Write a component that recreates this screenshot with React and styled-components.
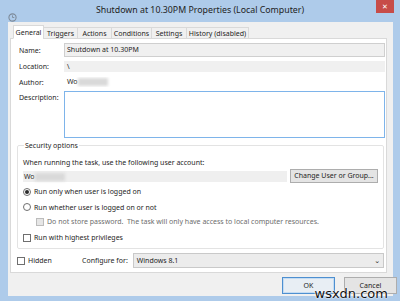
import React from "react";
import styled, { createGlobalStyle } from "styled-components";

const GlobalStyle = createGlobalStyle`
  html, body { margin: 0; padding: 0; }
  body { font-family: "Noto Sans", "DejaVu Sans", sans-serif; color: #1e1e1e; }
  * { box-sizing: border-box; }
`;

const Window = styled.div`
  position: relative;
  width: 400px;
  height: 301px;
  background: #aecbea;
  display: flex;
  flex-direction: column;
  overflow: hidden;
`;

const TitleBar = styled.div`
  height: 22px;
  display: grid;
  grid-template-columns: 30px 1fr 30px;
  align-items: start;
`;

const TitleIcon = styled.div`
  padding: 5px 0 0 8px;
  color: #7d8a99;
`;

const TitleText = styled.div`
  text-align: center;
  font-size: 8.8px;
  line-height: 21px;
  color: #222;
`;

const CloseButton = styled.div`
  justify-self: end;
  width: 18px;
  height: 13px;
  margin-right: 6px;
  background: #c74c48;
  color: #fff;
  font-size: 7px;
  font-weight: 700;
  line-height: 13px;
  text-align: center;
`;

const Client = styled.div`
  flex: 1;
  margin: 0 7px 5px 8px;
  background: #f0f0f0;
  display: flex;
  flex-direction: column;
  padding-top: 3px;
  font-size: 7px;
`;

const TabRow = styled.div`
  display: flex;
  align-items: flex-end;
  padding-left: 6px;
  height: 14px;
  position: relative;
  z-index: 1;
  margin-bottom: -1px;
`;

const Tab = styled.div`
  height: ${(p) => (p.$active ? "14px" : "12px")};
  width: ${(p) => p.$w}px;
  text-align: center;
  line-height: ${(p) => (p.$active ? "13px" : "11px")};
  border: 1px solid #d9d9d9;
  border-bottom: ${(p) => (p.$active ? "1px solid #fff" : "1px solid #d9d9d9")};
  margin-left: -1px;
  background: ${(p) => (p.$active ? "#fff" : "#f0f0f0")};
  white-space: nowrap;
`;

const Panel = styled.div`
  margin: 0 6px 0 2px;
  height: 235px;
  background: #fff;
  border: 1px solid #d9d9d9;
  padding: 4px 1px 0 8px;
  display: flex;
  flex-direction: column;
`;

const FieldRow = styled.div`
  display: grid;
  grid-template-columns: 45px 1fr;
  align-items: ${(p) => (p.$top ? "start" : "center")};
  margin-bottom: ${(p) => p.$gap ?? 4}px;
`;

const Label = styled.div`
  padding-top: ${(p) => (p.$top ? "2px" : "0")};
`;

const Field = styled.div`
  height: ${(p) => p.$h || 14}px;
  line-height: ${(p) => (p.$h || 14) - 2}px;
  padding: 0 2px;
  background: ${(p) => (p.$white ? "#fff" : "#f0f0f0")};
  border: 1px solid ${(p) => (p.$border ? p.$border : "transparent")};
  white-space: nowrap;
  overflow: hidden;
`;

const Blur = styled.span`
  display: inline-block;
  width: 30px;
  height: 8px;
  vertical-align: middle;
  background: #d9d9d9;
  filter: blur(1.5px);
`;

const Group = styled.fieldset`
  margin: 3px 1px 0 -2px;
  padding: 8px 5px 2px 5px;
  border: 1px solid #e3e3e3;
  border-radius: 2px;
  display: flex;
  flex-direction: column;
`;

const Legend = styled.legend`
  padding: 0 1px;
  margin-left: 1px;
  font-size: 7px;
`;

const AccountRow = styled.div`
  display: flex;
  align-items: center;
  margin-top: 2px;
  gap: 3px;
`;

const UserField = styled.div`
  flex: 1;
  height: 11px;
  line-height: 11px;
  padding: 0 1px;
  background: #efefef;
  white-space: nowrap;
`;

const Button = styled.div`
  height: ${(p) => p.$h || 17}px;
  width: ${(p) => p.$w}px;
  line-height: ${(p) => (p.$h || 17) - 2}px;
  text-align: center;
  border: 1px solid ${(p) => (p.$primary ? "#4d8fd0" : "#adadad")};
  background: ${(p) => (p.$primary ? "#e8eef4" : "#e4e4e4")};
  box-shadow: ${(p) => (p.$primary ? "inset 0 0 0 1px #c4dcf3" : "none")};
  white-space: nowrap;
`;

const OptionRow = styled.div`
  display: flex;
  align-items: center;
  gap: 3px;
  height: ${(p) => p.$h || 16}px;
  padding-left: ${(p) => p.$indent || 0}px;
  color: ${(p) => (p.$disabled ? "#6d6d6d" : "inherit")};
  white-space: nowrap;
`;

const Radio = styled.span`
  width: 8px;
  height: 8px;
  border-radius: 50%;
  border: 1px solid #6f6f6f;
  background: #fff;
  display: flex;
  align-items: center;
  justify-content: center;
  &::after {
    content: "";
    width: 4px;
    height: 4px;
    border-radius: 50%;
    background: ${(p) => (p.$checked ? "#2a2a2a" : "transparent")};
  }
`;

const Check = styled.span`
  width: 8px;
  height: 8px;
  border: 1px solid ${(p) => (p.$disabled ? "#bcbcbc" : "#6f6f6f")};
  background: ${(p) => (p.$disabled ? "#e6e6e6" : "#fff")};
`;

const BottomRow = styled.div`
  display: flex;
  align-items: center;
  margin-top: auto;
  margin-bottom: 4px;
  margin-left: -2px;
`;

const HiddenLabel = styled.div`
  display: flex;
  align-items: center;
  gap: 3px;
  width: 65px;
`;

const SelectBox = styled.div`
  flex: 1;
  margin-left: 5px;
  height: 15px;
  line-height: 13px;
  border: 1px solid #c9c9c9;
  background: #ececec;
  padding: 0 3px;
  display: flex;
  justify-content: space-between;
  margin-right: 1px;
`;

const DialogButtons = styled.div`
  display: flex;
  justify-content: flex-end;
  gap: 9px;
  margin-top: 4px;
  margin-right: -4px;
`;

const Watermark = styled.div`
  position: absolute;
  right: 12px;
  bottom: 0px;
  font-family: "DejaVu Sans", sans-serif;
  font-size: 13px;
  color: #111;
  text-shadow: 0 0 2px #fff, 0 0 2px #fff;
`;

const ClockIcon = () => (
  <svg width="9" height="9" viewBox="0 0 10 10">
    <circle cx="5" cy="5" r="4" fill="none" stroke="currentColor" strokeWidth="1.2" />
    <path d="M5 2.6V5h2" fill="none" stroke="currentColor" strokeWidth="1" />
  </svg>
);

const tabs = [
  ["General", 31],
  ["Triggers", 35],
  ["Actions", 35],
  ["Conditions", 41],
  ["Settings", 36],
  ["History (disabled)", 63],
];

const App = () => (
  <>
    <GlobalStyle />
    <Window>
      <TitleBar>
        <TitleIcon>
          <ClockIcon />
        </TitleIcon>
        <TitleText>Shutdown at 10.30PM Properties (Local Computer)</TitleText>
        <CloseButton>✕</CloseButton>
      </TitleBar>
      <Client>
        <TabRow>
          {tabs.map(([name, w], i) => (
            <Tab key={name} $w={w} $active={i === 0}>
              {name}
            </Tab>
          ))}
        </TabRow>
        <Panel>
          <FieldRow>
            <Label>Name:</Label>
            <Field $border="#cfcfcf">Shutdown at 10.30PM</Field>
          </FieldRow>
          <FieldRow>
            <Label>Location:</Label>
            <Field $h={11}>\</Field>
          </FieldRow>
          <FieldRow $gap={3}>
            <Label>Author:</Label>
            <Field $white $h={12}>
              Wo<Blur />
            </Field>
          </FieldRow>
          <FieldRow $top $gap={0}>
            <Label $top>Description:</Label>
            <Field $white $h={47} $border="#7eb4ea" />
          </FieldRow>
          <Group>
            <Legend>Security options</Legend>
            <div>When running the task, use the following user account:</div>
            <AccountRow>
              <UserField>
                Wo<Blur />
              </UserField>
              <Button $w={88} $h={14}>Change User or Group...</Button>
            </AccountRow>
            <OptionRow $h={17}>
              <Radio $checked />
              Run only when user is logged on
            </OptionRow>
            <OptionRow $h={14}>
              <Radio />
              Run whether user is logged on or not
            </OptionRow>
            <OptionRow $indent={13} $disabled $h={15}>
              <Check $disabled />
              Do not store password.&nbsp; The task will only have access to local computer resources.
            </OptionRow>
            <OptionRow $h={17}>
              <Check />
              Run with highest privileges
            </OptionRow>
          </Group>
          <BottomRow>
            <HiddenLabel>
              <Check />
              Hidden
            </HiddenLabel>
            <span>Configure for:</span>
            <SelectBox>
              <span>Windows 8.1</span>
              <span>⌄</span>
            </SelectBox>
          </BottomRow>
        </Panel>
        <DialogButtons>
          <Button $w={53} $primary>OK</Button>
          <Button $w={53}>Cancel</Button>
        </DialogButtons>
      </Client>
      <Watermark>wsxdn.com</Watermark>
    </Window>
  </>
);

export default App;
